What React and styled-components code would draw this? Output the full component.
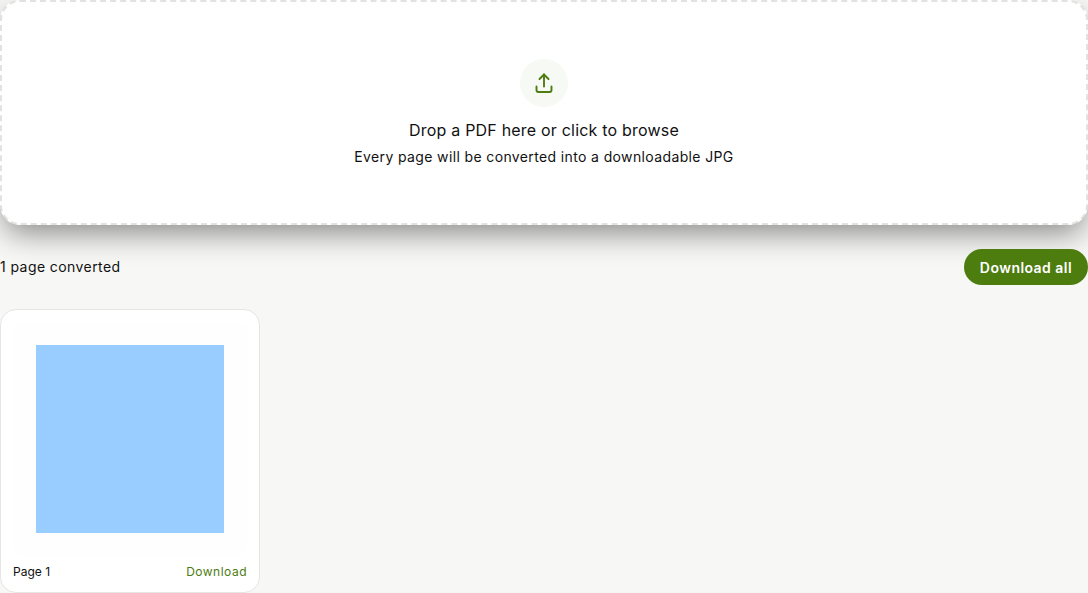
import React from 'react';
import styled, { createGlobalStyle } from 'styled-components';

const GlobalStyle = createGlobalStyle`
  html, body {
    margin: 0;
    padding: 0;
    background: #f7f7f5;
    overflow: hidden;
  }
  * {
    box-sizing: border-box;
  }
`;

const Page = styled.div`
  display: flex;
  flex-direction: column;
  width: 1088px;
  height: 593px;
  font-family: "Inter", "Liberation Sans", sans-serif;
  color: #111;
`;

const DropZone = styled.div`
  display: flex;
  flex-direction: column;
  align-items: center;
  height: 225px;
  padding-top: 57px;
  background: #fff;
  border: 2px dashed #e2e2e0;
  border-radius: 20px;
  box-shadow: 0 12px 30px -4px rgba(0, 0, 0, 0.45);
`;

const IconCircle = styled.div`
  display: flex;
  align-items: center;
  justify-content: center;
  width: 48px;
  height: 48px;
  border-radius: 50%;
  background: #f7f9f4;
  color: #4d7c0f;
`;

const DropTitle = styled.div`
  margin-top: 13px;
  font-size: 16px;
  line-height: 20px;
  letter-spacing: 0.2px;
`;

const DropHint = styled.div`
  margin-top: 7px;
  font-size: 14px;
  line-height: 20px;
  letter-spacing: 0.37px;
`;

const Toolbar = styled.div`
  display: flex;
  align-items: center;
  justify-content: space-between;
  margin-top: 24px;
`;

const Count = styled.span`
  padding-bottom: 2px;
  font-size: 14px;
  letter-spacing: 0.42px;
`;

const DownloadAll = styled.button`
  height: 36px;
  padding: 0 16px;
  border: none;
  border-radius: 18px;
  background: #4d7c0f;
  color: #fff;
  font-family: inherit;
  font-size: 14px;
  font-weight: 600;
  letter-spacing: 0.45px;
  cursor: pointer;
`;

const Grid = styled.div`
  display: grid;
  grid-template-columns: repeat(auto-fill, 260px);
  margin-top: 24px;
`;

const Card = styled.div`
  height: 284px;
  padding: 12px;
  background: #fff;
  border: 1px solid #e5e5e3;
  border-radius: 16px;
`;

const Thumb = styled.div`
  display: flex;
  align-items: center;
  justify-content: center;
  height: 234px;
  background: #fefefe;
  border-radius: 12px;
`;

const Sheet = styled.div`
  width: 188px;
  height: 188px;
  background: #99ccff;
`;

const CardFooter = styled.div`
  display: flex;
  align-items: center;
  justify-content: space-between;
  margin-top: 7px;
  font-size: 12px;
  line-height: 18px;
`;

const DownloadLink = styled.a`
  color: #4d7c0f;
  text-decoration: none;
  letter-spacing: 0.5px;
  cursor: pointer;
`;

const App = () => {
  return (
    <>
      <GlobalStyle />
      <Page>
        <DropZone>
          <IconCircle>
            <svg width="24" height="24" viewBox="0 0 24 24" fill="none" stroke="currentColor" strokeWidth="1.9" strokeLinecap="round" strokeLinejoin="round">
              <path d="M12 15.5V3.5" />
              <path d="m7.5 8 4.5-4.5L16.5 8" />
              <path d="M4.5 15.5v3.5a2 2 0 0 0 2 2h11a2 2 0 0 0 2-2v-3.5" />
            </svg>
          </IconCircle>
          <DropTitle>Drop a PDF here or click to browse</DropTitle>
          <DropHint>Every page will be converted into a downloadable JPG</DropHint>
        </DropZone>
        <Toolbar>
          <Count>1 page converted</Count>
          <DownloadAll>Download all</DownloadAll>
        </Toolbar>
        <Grid>
          <Card>
            <Thumb>
              <Sheet />
            </Thumb>
            <CardFooter>
              <span>Page 1</span>
              <DownloadLink>Download</DownloadLink>
            </CardFooter>
          </Card>
        </Grid>
      </Page>
    </>
  );
};

export default App;
